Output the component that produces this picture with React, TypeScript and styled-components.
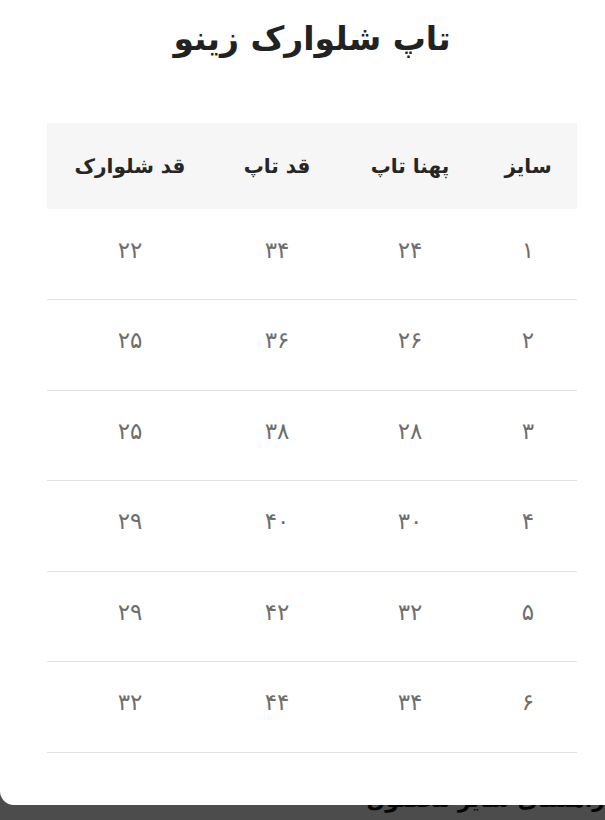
import React from "react";
import styled, { createGlobalStyle } from "styled-components";

const GlobalStyle = createGlobalStyle`
  html, body {
    margin: 0;
    padding: 0;
  }
  body {
    font-family: "DejaVu Sans", "Noto Sans", sans-serif;
    direction: rtl;
  }
`;

interface SizeRow {
  size: string;
  topWidth: string;
  topLength: string;
  shortsLength: string;
}

const rows: SizeRow[] = [
  { size: "۱", topWidth: "۲۴", topLength: "۳۴", shortsLength: "۲۲" },
  { size: "۲", topWidth: "۲۶", topLength: "۳۶", shortsLength: "۲۵" },
  { size: "۳", topWidth: "۲۸", topLength: "۳۸", shortsLength: "۲۵" },
  { size: "۴", topWidth: "۳۰", topLength: "۴۰", shortsLength: "۲۹" },
  { size: "۵", topWidth: "۳۲", topLength: "۴۲", shortsLength: "۲۹" },
  { size: "۶", topWidth: "۳۴", topLength: "۴۴", shortsLength: "۳۲" },
];

const columns = [
  { title: "سایز", width: 98 },
  { title: "پهنا تاپ", width: 138 },
  { title: "قد تاپ", width: 128 },
  { title: "قد شلوارک", width: 166 },
];

const Page = styled.div`
  position: relative;
  height: 820px;
  overflow: hidden;
  background: #ffffff;
`;

const Behind = styled.div`
  height: 100%;
  display: flex;
  flex-direction: column;
  justify-content: flex-end;
  box-sizing: border-box;
  padding-bottom: 8px;
`;

const BehindText = styled.div`
  font-size: 22px;
  font-weight: bold;
  color: #111;
  white-space: nowrap;
`;

const Overlay = styled.div`
  position: absolute;
  inset: 0;
  background: rgba(0, 0, 0, 0.7);
`;

const Sheet = styled.div`
  position: absolute;
  top: 0;
  left: 0;
  width: 625px;
  height: 805px;
  box-sizing: border-box;
  background: #ffffff;
  border-radius: 0 0 0 14px;
  padding: 0 48px 0 47px;
  display: flex;
  flex-direction: column;
`;

const Title = styled.h2`
  margin: 0;
  height: 123px;
  box-sizing: border-box;
  padding-top: 14px;
  text-align: center;
  font-size: 33px;
  font-weight: bold;
  color: #222;
  line-height: 50px;
`;

const Table = styled.table`
  width: 530px;
  border-collapse: collapse;
  table-layout: fixed;
`;

const HeadCell = styled.th<{ $w: number }>`
  width: ${(p) => p.$w}px;
  height: 86px;
  padding: 0;
  background: #f6f6f6;
  text-align: center;
  font-size: 20px;
  font-weight: 600;
  color: #262626;
`;

const BodyRow = styled.tr`
  border-bottom: 1px solid #e2e2e2;
`;

const Cell = styled.td`
  height: 90.5px;
  box-sizing: border-box;
  padding: 0 0 9px 0;
  text-align: center;
  font-size: 23px;
  color: #6e6e6e;
`;

export default function App() {
  return (
    <>
      <GlobalStyle />
      <Page>
        <Behind>
          <BehindText>راهنمای سایز محصول</BehindText>
        </Behind>
        <Overlay />
        <Sheet>
          <Title>تاپ شلوارک زینو</Title>
          <Table>
            <thead>
              <tr>
                {columns.map((c) => (
                  <HeadCell key={c.title} $w={c.width}>
                    {c.title}
                  </HeadCell>
                ))}
              </tr>
            </thead>
            <tbody>
              {rows.map((r) => (
                <BodyRow key={r.size}>
                  <Cell>{r.size}</Cell>
                  <Cell>{r.topWidth}</Cell>
                  <Cell>{r.topLength}</Cell>
                  <Cell>{r.shortsLength}</Cell>
                </BodyRow>
              ))}
            </tbody>
          </Table>
        </Sheet>
      </Page>
    </>
  );
}
